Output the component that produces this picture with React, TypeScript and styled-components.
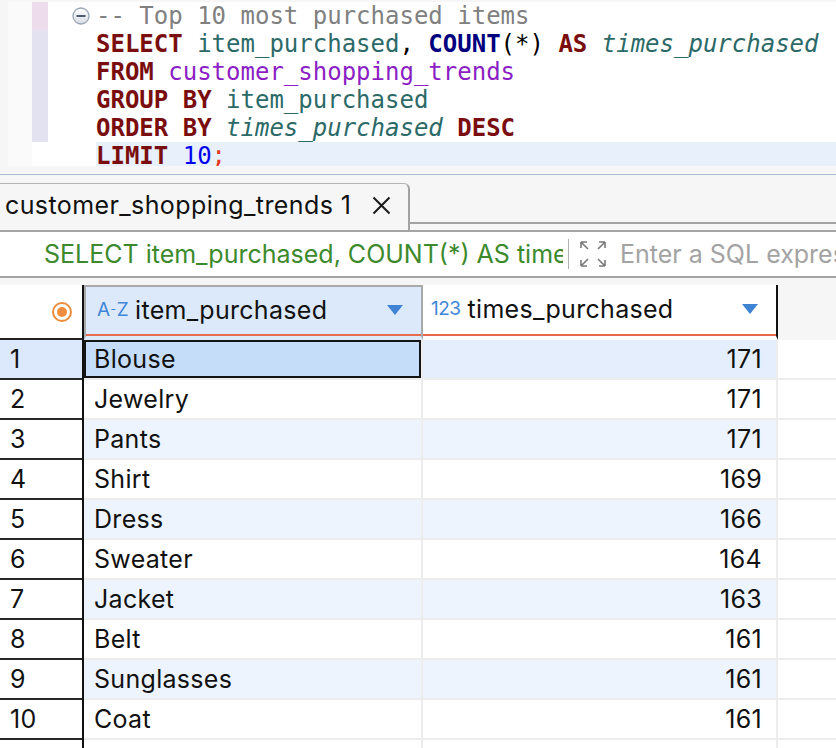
import styled, { createGlobalStyle } from "styled-components";

const GlobalStyle = createGlobalStyle`
  html, body {
    margin: 0;
    padding: 0;
    background: #f6f6f6;
  }
  body {
    font-family: Inter, "Liberation Sans", sans-serif;
  }
`;

const Page = styled.div`
  width: 836px;
  height: 748px;
  overflow: hidden;
  display: flex;
  flex-direction: column;
  background: #f6f6f6;
`;

/* ---------- SQL editor ---------- */

const Editor = styled.div`
  margin: 2px 0 0 8px;
  height: 164px;
  flex: none;
  overflow: hidden;
  background: #fff;
  display: flex;
  flex-direction: column;
  font-family: "DejaVu Sans Mono", monospace;
  font-size: 24px;
`;

const Line = styled.div`
  display: flex;
  height: 28px;
  flex: none;
`;

const Ruler = styled.div`
  width: 24px;
  background: #fafafa;
`;

const Mark = styled.div<{ $tone?: string }>`
  width: 16px;
  background: ${(p) => p.$tone ?? "transparent"};
`;

const Gutter = styled.div`
  width: 48px;
  display: flex;
  align-items: center;
  justify-content: flex-end;
  padding-right: 6px;
  box-sizing: border-box;
`;

const Code = styled.div<{ $current?: boolean }>`
  flex: 1;
  line-height: 28px;
  white-space: pre;
  color: #000;
  background: ${(p) => (p.$current ? "#e8f0fc" : "transparent")};
`;

const Comment = styled.span`
  color: #808080;
`;
const Kw = styled.span`
  color: #7a0e0e;
  font-weight: bold;
`;
const Fn = styled.span`
  color: #00007f;
  font-weight: bold;
`;
const Ident = styled.span<{ $italic?: boolean }>`
  color: #2c6a68;
  font-style: ${(p) => (p.$italic ? "italic" : "normal")};
`;
const Table = styled.span`
  color: #8c1fc4;
`;
const Num = styled.span`
  color: #0000ee;
`;
const Semi = styled.span`
  color: #e5341c;
`;

const FoldIcon = () => (
  <svg width="18" height="18" viewBox="0 0 18 18">
    <defs>
      <linearGradient id="fold" x1="0" y1="0" x2="0" y2="1">
        <stop offset="0" stopColor="#ffffff" />
        <stop offset="1" stopColor="#d7dde6" />
      </linearGradient>
    </defs>
    <circle cx="9" cy="9" r="8" fill="url(#fold)" stroke="#9aa6b6" strokeWidth="1.3" />
    <rect x="4.5" y="8" width="9" height="2" fill="#4d5b70" />
  </svg>
);

/* ---------- result tab ---------- */

const Divider = styled.div`
  margin-top: 8px;
  height: 1px;
  flex: none;
  background: #a8bcd6;
`;

const TabStrip = styled.div`
  margin-top: 8px;
  display: flex;
  align-items: flex-start;
  flex: none;
  height: 47px;
`;

const Tab = styled.div`
  width: 410px;
  height: 47px;
  flex: none;
  box-sizing: border-box;
  border-top: 1px solid #b4b4b4;
  border-right: 2px solid #a2a2a2;
  border-top-right-radius: 6px;
  display: flex;
  align-items: center;
  padding: 0 0 4px 5px;
  font-size: 25px;
  letter-spacing: 0.4px;
  color: #111;
  gap: 20px;
  white-space: nowrap;
`;

const TabFiller = styled.div`
  flex: 1;
  height: 39px;
  border-bottom: 2px solid #a2a2a2;
`;

const CloseIcon = () => (
  <svg width="21" height="21" viewBox="0 0 21 21" style={{ flex: "none" }}>
    <path d="M2.5 2.5 L18.5 18.5 M18.5 2.5 L2.5 18.5" stroke="#1a1a1a" strokeWidth="2" fill="none" />
  </svg>
);

/* ---------- filter bar ---------- */

const FilterBar = styled.div`
  height: 44px;
  flex: none;
  background: #fff;
  border-top: 2px solid #a4a4a4;
  border-bottom: 2px solid #a4a4a4;
  display: flex;
  align-items: center;
  font-size: 25px;
  overflow: hidden;
`;

const FilterQuery = styled.div`
  margin-left: 44px;
  width: 519px;
  flex: none;
  overflow: hidden;
  white-space: nowrap;
  color: #3c8a2c;
`;

const FilterSep = styled.div`
  margin-left: 5px;
  width: 1px;
  flex: none;
  height: 30px;
  background: #b0b0b0;
`;

const ExpandIcon = () => (
  <svg width="30" height="30" viewBox="0 0 30 30" style={{ marginLeft: 9, flex: "none" }}>
    <g stroke="#7a7a7a" strokeWidth="1.6" fill="none">
      <path d="M3 3 L10 10 M3 3 L3 9 M3 3 L9 3" />
      <path d="M27 3 L20 10 M27 3 L27 9 M27 3 L21 3" />
      <path d="M3 27 L10 20 M3 27 L3 21 M3 27 L9 27" />
      <path d="M27 27 L20 20 M27 27 L27 21 M27 27 L21 27" />
    </g>
  </svg>
);

const Placeholder = styled.div`
  margin-left: 12px;
  flex: none;
  color: #a3a3a3;
  white-space: nowrap;
`;

/* ---------- result grid ---------- */

const Grid = styled.div`
  margin-top: 7px;
  flex: 1;
  display: flex;
  flex-direction: column;
  font-size: 25px;
  letter-spacing: 0.3px;
  color: #111;
`;

const HeaderRow = styled.div`
  display: flex;
  height: 55px;
  flex: none;
`;

const Corner = styled.div`
  width: 82px;
  background: #fff;
  border-right: 2px solid #111;
  border-bottom: 2px solid #222;
  height: 53px;
  display: flex;
  align-items: center;
  justify-content: flex-end;
`;

const HeadCell = styled.div<{ $w: number; $active?: boolean }>`
  width: ${(p) => p.$w}px;
  box-sizing: border-box;
  height: 55px;
  background: ${(p) => (p.$active ? "#dce9fb" : "#fff")};
  border-top: ${(p) => (p.$active ? "2px solid #a9a9a9" : "none")};
  border-left: ${(p) => (p.$active ? "2px solid #a9a9a9" : "none")};
  border-right: 2px solid ${(p) => (p.$active ? "#a9a9a9" : "#111")};
  border-bottom: 4px solid transparent;
  box-shadow: inset 0 -2px 0 #e86a4c;
  display: flex;
  align-items: center;
  padding: 0 18px 4px ${(p) => (p.$active ? 11 : 8)}px;
  gap: 7px;
`;

const HeadFiller = styled.div`
  flex: 1;
`;

const TypeTag = styled.span`
  color: #3f86d6;
  font-size: 19px;
  letter-spacing: -0.5px;
`;

const TagDash = styled.span`
  font-size: 12px;
  vertical-align: 3px;
  margin: 0 1px;
`;

const HeadLabel = styled.span`
  flex: 1;
`;

const SortArrow = styled.span`
  width: 0;
  height: 0;
  border-left: 8px solid transparent;
  border-right: 8px solid transparent;
  border-top: 10px solid #3f84d3;
`;

const Row = styled.div`
  display: flex;
  height: 40px;
  flex: none;
`;

const NumCell = styled.div<{ $sel?: boolean }>`
  width: 82px;
  box-sizing: border-box;
  padding-left: 10px;
  background: ${(p) => (p.$sel ? "#dce8fb" : "#fff")};
  border-bottom: 2px solid #262626;
  display: flex;
  align-items: center;
`;

const NumEdge = styled.div`
  width: 2px;
  background: #111;
`;

const Cell = styled.div<{ $w: number; $tone: string; $right?: boolean; $sel?: boolean }>`
  width: ${(p) => p.$w}px;
  box-sizing: border-box;
  background: ${(p) => p.$tone};
  border-right: 2px solid #ececec;
  border-bottom: 2px solid #ececec;
  display: flex;
  align-items: center;
  justify-content: ${(p) => (p.$right ? "flex-end" : "flex-start")};
  padding: ${(p) => (p.$right ? "0 14px 0 0" : "0 0 0 10px")};
  box-shadow: ${(p) => (p.$sel ? "inset 0 0 0 2px #141414" : "none")};
`;

const RowFiller = styled.div`
  flex: 1;
  background: #fff;
  border-bottom: 2px solid #ececec;
`;

const RadioIcon = () => (
  <svg width="22" height="22" viewBox="0 0 22 22" style={{ marginRight: 9 }}>
    <circle cx="11" cy="11" r="9" fill="none" stroke="#ef8d3c" strokeWidth="2" />
    <circle cx="11" cy="11" r="5" fill="#ef8d3c" />
  </svg>
);

const rows: [string, number][] = [
  ["Blouse", 171],
  ["Jewelry", 171],
  ["Pants", 171],
  ["Shirt", 169],
  ["Dress", 166],
  ["Sweater", 164],
  ["Jacket", 163],
  ["Belt", 161],
  ["Sunglasses", 161],
  ["Coat", 161],
];

export default function App() {
  return (
    <Page>
      <GlobalStyle />
      <Editor>
        <Line>
          <Ruler />
          <Mark $tone="#ecdcec" />
          <Gutter>
            <FoldIcon />
          </Gutter>
          <Code>
            <Comment>-- Top 10 most purchased items</Comment>
          </Code>
        </Line>
        <Line>
          <Ruler />
          <Mark $tone="#e2e2f0" />
          <Gutter />
          <Code>
            <Kw>SELECT</Kw> <Ident>item_purchased</Ident>, <Fn>COUNT</Fn>(*) <Kw>AS</Kw>{" "}
            <Ident $italic>times_purchased</Ident>
          </Code>
        </Line>
        <Line>
          <Ruler />
          <Mark $tone="#e2e2f0" />
          <Gutter />
          <Code>
            <Kw>FROM</Kw> <Table>customer_shopping_trends</Table>
          </Code>
        </Line>
        <Line>
          <Ruler />
          <Mark $tone="#e2e2f0" />
          <Gutter />
          <Code>
            <Kw>GROUP BY</Kw> <Ident>item_purchased</Ident>
          </Code>
        </Line>
        <Line>
          <Ruler />
          <Mark $tone="#e2e2f0" />
          <Gutter />
          <Code>
            <Kw>ORDER BY</Kw> <Ident $italic>times_purchased</Ident> <Kw>DESC</Kw>
          </Code>
        </Line>
        <Line>
          <Ruler />
          <Mark />
          <Gutter />
          <Code $current>
            <Kw>LIMIT</Kw> <Num>10</Num>
            <Semi>;</Semi>
          </Code>
        </Line>
      </Editor>

      <Divider />

      <TabStrip>
        <Tab>
          customer_shopping_trends 1
          <CloseIcon />
        </Tab>
        <TabFiller />
      </TabStrip>

      <FilterBar>
        <FilterQuery>SELECT item_purchased, COUNT(*) AS times_purchased FROM customer_shopping_trends</FilterQuery>
        <FilterSep />
        <ExpandIcon />
        <Placeholder>Enter a SQL expression to filter results</Placeholder>
      </FilterBar>

      <Grid>
        <HeaderRow>
          <Corner>
            <RadioIcon />
          </Corner>
          <HeadCell $w={339} $active>
            <TypeTag>
              A<TagDash>-</TagDash>Z
            </TypeTag>
            <HeadLabel>item_purchased</HeadLabel>
            <SortArrow />
          </HeadCell>
          <HeadCell $w={355}>
            <TypeTag>123</TypeTag>
            <HeadLabel>times_purchased</HeadLabel>
            <SortArrow />
          </HeadCell>
          <HeadFiller />
        </HeaderRow>

        {rows.map(([name, count], i) => {
          const sel = i === 0;
          const tone = i % 2 === 0 ? (sel ? "#e4eefc" : "#edf4fd") : "#fff";
          return (
            <Row key={name}>
              <NumCell $sel={sel}>{i + 1}</NumCell>
              <NumEdge />
              <Cell $w={339} $tone={sel ? "#c6ddfa" : tone} $sel={sel}>
                {name}
              </Cell>
              <Cell $w={355} $tone={tone} $right>
                {count}
              </Cell>
              <RowFiller />
            </Row>
          );
        })}
        <Row>
          <NumCell />
          <NumEdge />
          <Cell $w={339} $tone="#fff" />
          <Cell $w={355} $tone="#fff" />
          <RowFiller />
        </Row>
      </Grid>
    </Page>
  );
}
